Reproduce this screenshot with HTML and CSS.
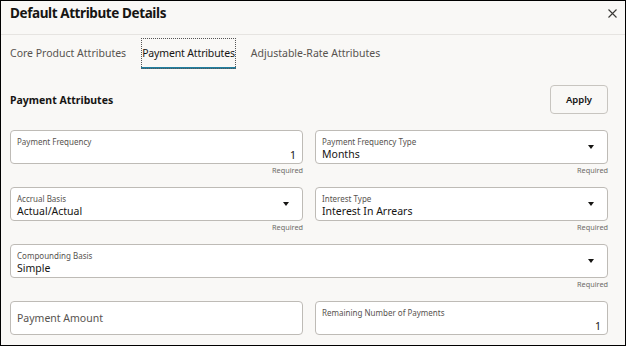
FILE: index.html
```html
<!DOCTYPE html>
<html lang="en">
<head>
  <meta charset="UTF-8" />
  <title>Default Attribute Details</title>
  <link rel="stylesheet" href="styles.css">
</head>
<body>
  <div class="dialog">
    <div class="header">
      <div class="title">Default Attribute Details</div>
      <svg class="close" width="9" height="9" viewBox="0 0 9 9">
        <path d="M0.5 0.5 L8.5 8.5 M8.5 0.5 L0.5 8.5" stroke="#3a3836" stroke-width="1.1" fill="none"/>
      </svg>
    </div>

    <div class="tabs">
      <div class="tab">Core Product Attributes</div>
      <div class="tab active">Payment Attributes</div>
      <div class="tab">Adjustable-Rate Attributes</div>
    </div>

    <div class="content">
      <div class="section-head">
        <div class="section-title">Payment Attributes</div>
        <button class="apply">Apply</button>
      </div>

      <div class="form">
        <div class="field">
          <div class="box">
            <div class="label">Payment Frequency</div>
            <div class="value num">1</div>
          </div>
          <div class="help">Required</div>
        </div>
        <div class="field">
          <div class="box select">
            <div class="label">Payment Frequency Type</div>
            <div class="value">Months</div>
            <span class="arrow"></span>
          </div>
          <div class="help">Required</div>
        </div>

        <div class="field">
          <div class="box select">
            <div class="label">Accrual Basis</div>
            <div class="value">Actual/Actual</div>
            <span class="arrow"></span>
          </div>
          <div class="help">Required</div>
        </div>
        <div class="field">
          <div class="box select">
            <div class="label">Interest Type</div>
            <div class="value">Interest In Arrears</div>
            <span class="arrow"></span>
          </div>
          <div class="help">Required</div>
        </div>

        <div class="field wide">
          <div class="box select">
            <div class="label">Compounding Basis</div>
            <div class="value">Simple</div>
            <span class="arrow"></span>
          </div>
          <div class="help">Required</div>
        </div>

        <div class="field">
          <div class="box empty">
            <div class="placeholder">Payment Amount</div>
          </div>
        </div>
        <div class="field">
          <div class="box">
            <div class="label">Remaining Number of Payments</div>
            <div class="value num">1</div>
          </div>
        </div>
      </div>
    </div>
  </div>
</body>
</html>
```

FILE: styles.css
```css
* {
  box-sizing: border-box;
}

body {
  margin: 0;
  background: #f9f8f6;
  font-family: "Noto Sans", sans-serif;
  color: #161513;
}

.dialog {
  width: 626px;
  height: 346px;
  border: 1px solid #000;
  background: #f9f8f6;
  overflow: hidden;
}

.header {
  height: 34px;
  display: flex;
  align-items: flex-start;
  justify-content: space-between;
  padding: 2px 8px 0 9px;
  border-bottom: 1px solid #e6e4e1;
}

.title {
  font-size: 13.5px;
  line-height: 20px;
  font-weight: 700;
  letter-spacing: -0.4px;
}

.close {
  margin-top: 6px;
}

.tabs {
  display: flex;
  gap: 14px;
  padding: 3px 8px 0;
  height: 34px;
}

.tab {
  font-size: 10.5px;
  line-height: 14px;
  color: #57534f;
  padding: 8px 1px 0;
  height: 31px;
}

.tab.active {
  color: #161513;
  letter-spacing: -0.15px;
  outline: 1px dotted #555;
  outline-offset: -1px;
  border-bottom: 2px solid #227e9e;
}

.content {
  padding: 0 17px 0 9px;
}

.section-head {
  display: flex;
  justify-content: space-between;
  align-items: center;
  margin-top: 16px;
  height: 29px;
}

.section-title {
  font-size: 10.5px;
  font-weight: 700;
}

.apply {
  width: 58px;
  height: 29px;
  border: 1px solid #c8c5c0;
  border-radius: 4px;
  background: #f9f8f6;
  font-family: "Noto Sans", sans-serif;
  font-size: 9.5px;
  font-weight: 600;
  color: #161513;
  padding: 0;
}

.form {
  display: grid;
  grid-template-columns: 1fr 1fr;
  column-gap: 12px;
  margin-top: 16px;
}

.field {
  height: 57px;
}

.field.wide {
  grid-column: span 2;
}

.box {
  position: relative;
  height: 34px;
  border: 1px solid #bebbb6;
  border-radius: 4px;
  background: #fff;
  padding: 6px 6px 0;
}

.label {
  font-size: 8px;
  line-height: 10px;
  color: #57534f;
}

.value {
  font-size: 10.5px;
  line-height: 11px;
  margin-top: 2px;
  color: #161513;
}

.value.num {
  text-align: right;
  margin-top: 3px;
}

.arrow {
  position: absolute;
  right: 13px;
  top: 14px;
  width: 0;
  height: 0;
  border-left: 3.5px solid transparent;
  border-right: 3.5px solid transparent;
  border-top: 4px solid #161513;
}

.box.empty {
  display: flex;
  align-items: center;
  padding-top: 0;
}

.placeholder {
  font-size: 10.5px;
  color: #57534f;
}

.help {
  text-align: right;
  font-size: 7.3px;
  line-height: 10px;
  color: #6f6b67;
  margin-top: 1px;
}
```
